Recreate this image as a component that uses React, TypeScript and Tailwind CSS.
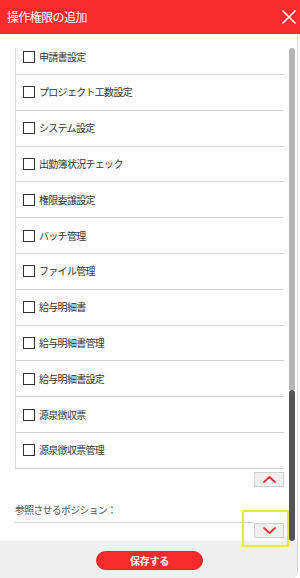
import React from "react";

const items = [
  "申請書設定",
  "プロジェクト工数設定",
  "システム設定",
  "出勤簿状況チェック",
  "権限委譲設定",
  "バッチ管理",
  "ファイル管理",
  "給与明細書",
  "給与明細書管理",
  "給与明細書設定",
  "源泉徴収票",
  "源泉徴収票管理",
];

function Chevron({ up }: { up?: boolean }) {
  return (
    <svg width="13" height="7" viewBox="0 0 13 7" fill="none">
      <path
        d={up ? "M1 6 L6.5 1 L12 6" : "M1 1 L6.5 6 L12 1"}
        stroke="#f23030"
        strokeWidth="1.8"
        strokeLinecap="round"
        strokeLinejoin="round"
      />
    </svg>
  );
}

export default function App() {
  return (
    <div
      className="w-[300px] h-[578px] bg-white flex flex-col relative overflow-hidden"
      style={{ fontFamily: '"Noto Sans CJK JP", "Noto Sans", sans-serif' }}
    >
      <div className="h-[34px] bg-[#f72b2b] flex items-center justify-between pl-[7px] pr-[3px] shrink-0">
        <span className="text-white text-[12px] tracking-[-0.6px] leading-none">操作権限の追加</span>
        <svg width="16" height="16" viewBox="0 0 16 16" fill="none">
          <path d="M1.5 1.5 L14.5 14.5 M14.5 1.5 L1.5 14.5" stroke="white" strokeWidth="1.6" />
        </svg>
      </div>
      <div className="flex-1 w-[298px] border-r border-[#d6d6d6] rounded-br-[6px] flex flex-col overflow-hidden">
        <div className="h-[493px] mt-[14px] flex pl-[15px] overflow-hidden shrink-0">
          <div className="w-[269px] shrink-0 mt-[-8.8px] flex flex-col">
            <div className="border-l border-[#d9d9d9]">
              {items.map((t) => (
                <div
                  key={t}
                  className="h-[35.8px] border-b border-[#d4d4d4] flex items-center pl-[7px] gap-[4px]"
                >
                  <div className="w-[12px] h-[12px] border-[1.5px] border-[#333] bg-white shrink-0" />
                  <span className="text-[10px] tracking-[-0.7px] text-[#333] leading-none">{t}</span>
                </div>
              ))}
            </div>
            <button className="mt-[3.5px] ml-auto w-[30px] h-[15px] bg-[#f0f0f0] border border-[#cfcfcf] flex items-center justify-center">
              <Chevron up />
            </button>
            <div className="mt-[16px] text-[10px] tracking-[-0.8px] text-[#555] leading-[14px]">
              参照させるポジション：
            </div>
            <div className="mt-[5px] flex items-start">
              <div className="flex-1 border-t border-[#d4d4d4]" />
              <button className="mt-[1px] w-[30px] h-[15px] bg-[#f0f0f0] border border-[#cfcfcf] flex items-center justify-center">
                <Chevron />
              </button>
            </div>
          </div>
          <div className="ml-[5px] w-[6px] flex flex-col">
            <div className="h-[342px] bg-[#b5b5b5] rounded-t-full" />
            <div className="flex-1 bg-[#555555] rounded-full" />
          </div>
        </div>
        <div className="flex-1 bg-[#f0f0f0] flex items-start pt-[10px] pl-[96px]">
          <button className="w-[107px] h-[19px] rounded-full bg-[#f72b2b] border border-[#e42424] flex items-center justify-center">
            <span className="text-white text-[10px] font-bold tracking-[-0.3px] leading-none">保存する</span>
          </button>
        </div>
      </div>
      <div className="absolute left-[242px] top-[510px] w-[47px] h-[37px] border-2 border-[#e6e64a]" />
    </div>
  );
}
